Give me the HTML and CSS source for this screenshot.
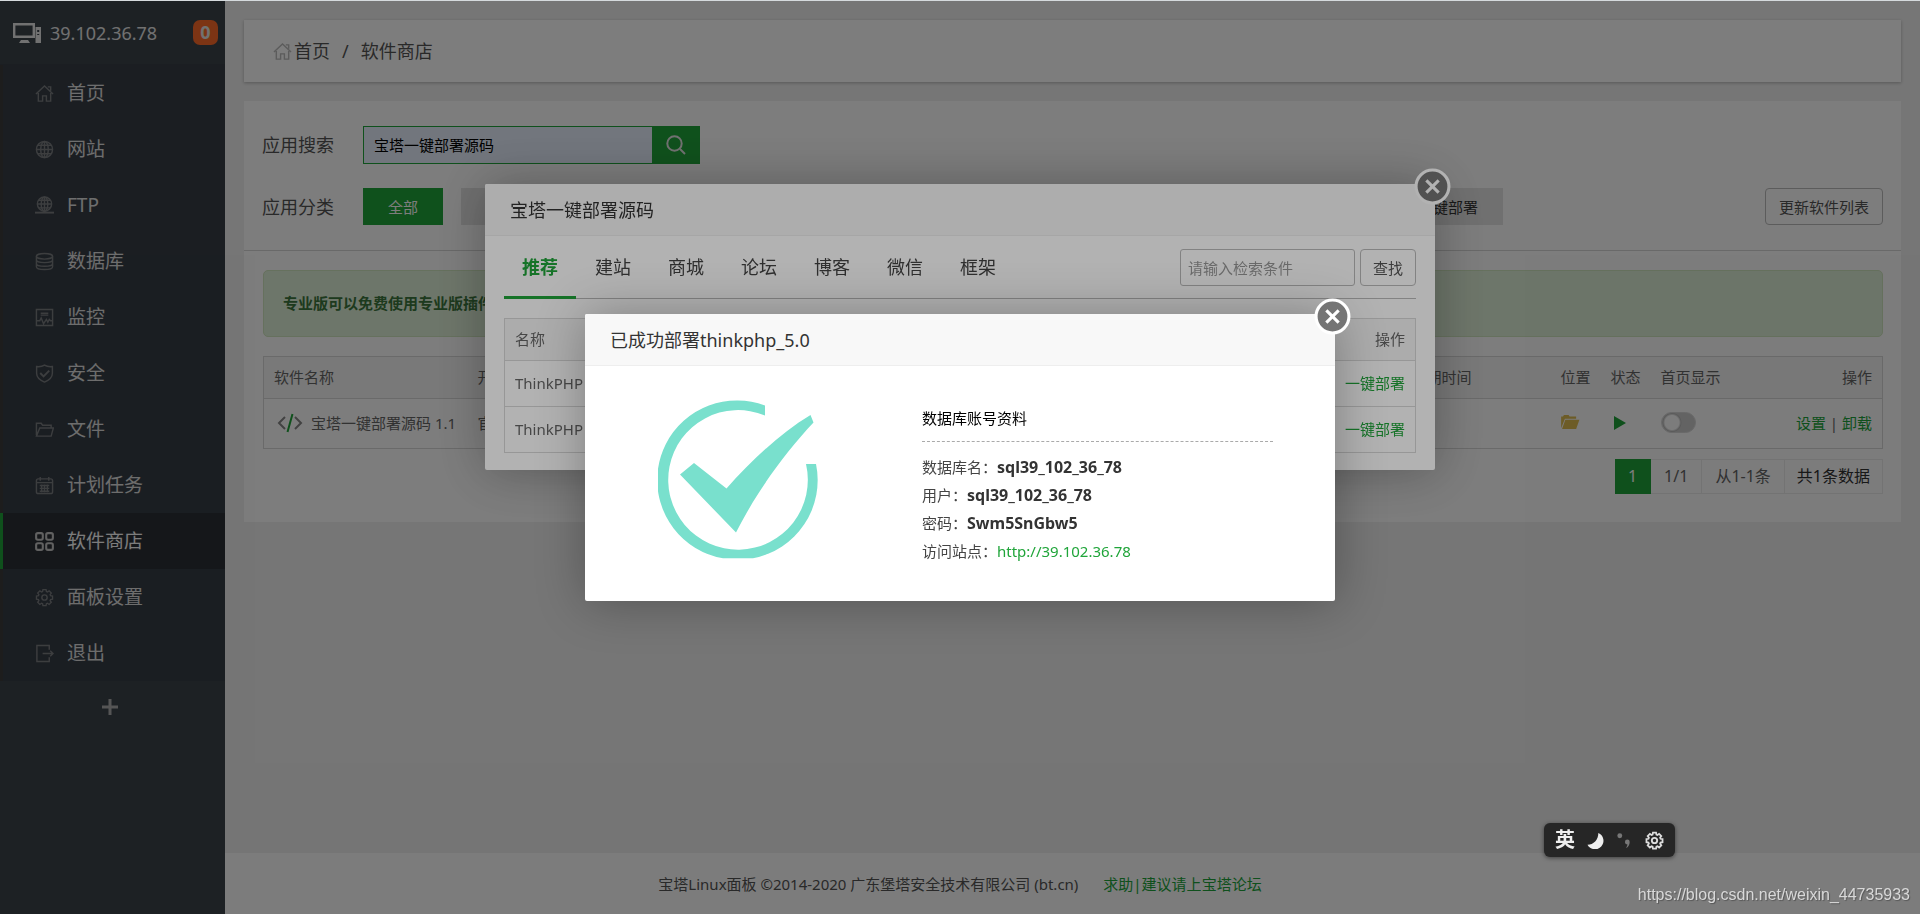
FILE: index.html
```html
<!DOCTYPE html>
<html lang="zh-CN">
<head>
<meta charset="utf-8">
<title>软件商店</title>
<link rel="stylesheet" href="styles.css">
</head>
<body>
<svg class="defs" aria-hidden="true">
  <symbol id="i-home" viewBox="0 0 20 20"><path d="M1 10.500 10 2l9 8.500M3.500 9.500V18H8v-5.500h4V18h4.500V9.500M13.500 3h3v4"/></symbol>
  <symbol id="i-gear" viewBox="0 0 20 20"><circle cx="10" cy="10" r="2.800"/><path d="M8.200 1.200h3.600l.4 2.300 1.200.5 1.900-1.400 2.500 2.500-1.400 1.900.5 1.200 2.300.4v3.600l-2.300.4-.5 1.200 1.400 1.900-2.500 2.500-1.900-1.400-1.200.5-.4 2.300H8.200l-.4-2.300-1.200-.5-1.900 1.400-2.500-2.500 1.400-1.900-.5-1.200-2.300-.4V8.600l2.300-.4.5-1.200-1.400-1.900 2.500-2.500L6.600 4l1.200-.5z" transform="translate(.8 .6) scale(.92)"/></symbol>
</svg>
<div class="topline"></div>
<div class="app">
  <aside class="sidebar">
    <div class="host">
      <svg class="host-icon" viewBox="0 0 28 20"><path d="M1.200 1.200h19.600v12.600H1.200z" fill="none" stroke="currentColor" stroke-width="2.400"/><path d="M8 17h7l2 3H6zM22.500 4h5.500v16h-5.500z" fill="currentColor"/><path d="M24.200 7h2v2h-2zM24.200 11h2v1h-2z" fill="#3c444d"/></svg>
      <span class="host-ip">39.102.36.78</span><span class="badge">0</span>
    </div>
    <nav class="menu">
      <a href="#"><svg class="ico"><use href="#i-home"/></svg>首页</a>
      <a href="#"><svg class="ico" viewBox="0 0 20 20"><circle cx="10" cy="10" r="8.500"/><ellipse cx="10" cy="10" rx="4" ry="8.500"/><path d="M10 1.500v17M1.500 10h17M3 5.500h14M3 14.500h14"/></svg>网站</a>
      <a href="#"><svg class="ico" viewBox="0 0 20 20"><circle cx="10" cy="8.500" r="7.500"/><ellipse cx="10" cy="8.500" rx="3.500" ry="7.500"/><path d="M10 1v17M2.500 8.500h15M4 4.500h12M4 12.500h12"/><path d="M0 17.500h20" stroke-width="2"/></svg>FTP</a>
      <a href="#"><svg class="ico" viewBox="0 0 20 20"><ellipse cx="10" cy="4.500" rx="8.500" ry="3"/><path d="M1.500 4.500v11c0 1.700 3.800 3 8.500 3s8.500-1.300 8.500-3v-11M1.500 8.200c0 1.700 3.800 3 8.500 3s8.500-1.300 8.500-3M1.500 12c0 1.700 3.800 3 8.500 3s8.500-1.300 8.500-3"/></svg>数据库</a>
      <a href="#"><svg class="ico" viewBox="0 0 20 20"><path d="M1.500 1.500h17v17h-17zM6 5.500h8M6 7.500h8M1.500 13.500H5l1.500-3 2.500 6 3-4.500 1.500 3 1.500-3 1.500 1.500h2"/></svg>监控</a>
      <a href="#"><svg class="ico" viewBox="0 0 20 20"><path d="M10 1.200c2.500 1.500 5.500 1.800 8.300 1.500v7c0 4.500-4 7.500-8.300 9.300-4.300-1.800-8.300-4.800-8.300-9.300v-7c2.800.3 5.800 0 8.300-1.500z"/><path d="m5.500 9.500 3.500 3.500L15 7" stroke-width="2"/></svg>安全</a>
      <a href="#"><svg class="ico" viewBox="0 0 20 20"><path d="M1.500 16V3.500h5l1.500 2h9v3M1.500 17 5 8.500h14.300L17 17z"/></svg>文件</a>
      <a href="#"><svg class="ico" viewBox="0 0 20 20"><rect x="1.500" y="3" width="17" height="15.500" rx="2"/><path d="M5.500 1v4M14.500 1v4M1.500 7h17M5 10h10M5 13h10M5 16h10M7 9v8M10 9v8M13 9v8"/></svg>计划任务</a>
      <a href="#" class="active"><svg class="ico" viewBox="0 0 20 20"><rect x="1.200" y="1.200" width="7" height="7" rx="1.800"/><rect x="11.800" y="1.200" width="7" height="7" rx="1.800"/><rect x="1.200" y="11.800" width="7" height="7" rx="1.800"/><rect x="11.800" y="11.800" width="7" height="7" rx="1.800"/></svg>软件商店</a>
      <a href="#"><svg class="ico"><use href="#i-gear"/></svg>面板设置</a>
      <a href="#"><svg class="ico" viewBox="0 0 20 20"><path d="M15 6V1.500H2v17h13V14M8 10h11M16 7l3 3-3 3"/></svg>退出</a>
    </nav>
    <button class="add" aria-label="添加"><svg viewBox="0 0 16 16"><path d="M8 0v16M0 8h16"/></svg></button>
  </aside>
  <div class="main">
    <div class="crumbs"><svg class="ico"><use href="#i-home"/></svg><a href="#">首页</a><span class="sep">/</span><span>软件商店</span></div>
    <section class="store">
      <div class="filters">
        <div class="frow"><label for="q">应用搜索</label><div class="search"><input id="q" type="text" value="宝塔一键部署源码"><button aria-label="搜索"><svg viewBox="0 0 20 20"><circle cx="8.500" cy="8.500" r="7.200"/><path d="m14 14 5 5"/></svg></button></div></div>
        <div class="frow cats-row"><span class="flabel">应用分类</span><div class="cats"><button class="on">全部</button><button class="installed" aria-label="已安装"></button><button class="last">一键部署</button></div><button class="btn refresh">更新软件列表</button></div>
      </div>
      <div class="body">
        <div class="notice">专业版可以免费使用专业版插件</div>
        <table class="grid apps">
          <colgroup><col class="c-name"><col><col class="c-time"><col class="c-loc"><col class="c-state"><col class="c-show"><col class="c-op"></colgroup>
          <thead><tr><th>软件名称</th><th>开发</th><th>到期时间</th><th>位置</th><th>状态</th><th>首页显示</th><th class="r">操作</th></tr></thead>
          <tbody><tr>
            <td><span class="appname"><svg viewBox="0 0 26 20"><path d="M8 4 2 10l6 6M18 4l6 6-6 6" stroke="#888"/><path d="M15.500 1 10.500 19" stroke="#20a53a"/></svg>宝塔一键部署源码 1.1</span></td>
            <td>官方</td><td></td>
            <td><svg class="folder" viewBox="0 0 20 16"><path d="M0 14V1.500h2L3 0h5l1 1.500h7V4H4z"/><path d="M4.500 5H19.500L16 15H1z"/></svg></td>
            <td><svg class="play" viewBox="0 0 12 14"><path d="M0 0v14l12-7z"/></svg></td>
            <td><input class="switch" type="checkbox" aria-label="首页显示"></td>
            <td class="r"><a href="#">设置</a> | <a href="#">卸载</a></td>
          </tr></tbody>
        </table>
        <div class="pager"><span class="cur">1</span><span>1/1</span><span>从1-1条</span><span class="total">共1条数据</span></div>
      </div>
    </section>
    <footer class="footer"><span>宝塔Linux面板 ©2014-2020 广东堡塔安全技术有限公司 (bt.cn)</span><a href="#">求助|建议请上宝塔论坛</a></footer>
  </div>
</div>

<div class="shade shade-deploy">
  <div class="dialog deploy" role="dialog" aria-label="宝塔一键部署源码">
    <h2>宝塔一键部署源码</h2>
    <button class="close" aria-label="关闭"><svg viewBox="0 0 36 36"><circle cx="18" cy="18" r="16"/><path d="m12 12 12 12M24 12 12 24"/></svg></button>
    <div class="deploy-body">
      <div class="tabs">
        <button class="on">推荐</button><button>建站</button><button>商城</button><button>论坛</button><button>博客</button><button>微信</button><button>框架</button>
        <div class="find"><input type="text" placeholder="请输入检索条件" aria-label="检索条件"><button class="btn">查找</button></div>
      </div>
      <table class="grid">
        <thead><tr><th>名称</th><th class="r">操作</th></tr></thead>
        <tbody><tr><td>ThinkPHP</td><td class="r"><a href="#">一键部署</a></td></tr><tr><td>ThinkPHP</td><td class="r"><a href="#">一键部署</a></td></tr></tbody>
      </table>
    </div>
  </div>
</div>

<div class="shade shade-done">
  <div class="dialog done" role="dialog" aria-label="已成功部署thinkphp_5.0">
    <h2>已成功部署thinkphp_5.0</h2>
    <button class="close" aria-label="关闭"><svg viewBox="0 0 36 36"><circle cx="18" cy="18" r="16"/><path d="m12 12 12 12M24 12 12 24"/></svg></button>
    <div class="done-body">
      <svg class="ok" viewBox="0 0 160 160"><path d="M107 5.500C98 2 89 .5 80 .5a79.500 79.500 0 0 0-15 157.800h30A79.500 79.500 0 0 0 158 64h-10a69.800 69.800 0 1 1-41-48.500z"/><path d="M22 74.500 36 63l32.500 25.500C92 62 121 34 152.500 15l3 7.500C127 53 99 91 78 132.500z"/></svg>
      <div class="info">
        <h3>数据库账号资料</h3>
        <p>数据库名：<strong>sql39_102_36_78</strong></p>
        <p>用户：<strong>sql39_102_36_78</strong></p>
        <p>密码：<strong>Swm5SnGbw5</strong></p>
        <p>访问站点：<a href="#">http://39.102.36.78</a></p>
      </div>
    </div>
  </div>
</div>

<div class="ime"><b>英</b><svg viewBox="0 0 18 18"><path d="M12 1a9 9 0 1 1-11.500 12.500C7 13.500 12 8 12 1z" fill="#eee"/></svg><svg viewBox="0 0 18 18"><circle cx="4" cy="4" r="2.600" fill="#777"/><path d="M9.500 10.500a2.500 2.500 0 1 1 5 0c0 3-1.500 5.500-4 6.500 1-1.500 1.500-2.500 1.500-4-1.500 0-2.500-1-2.500-2.500z" fill="#777"/></svg><svg class="ime-gear"><use href="#i-gear"/></svg></div>
<div class="mark">https://blog.csdn.net/weixin_44735933</div>
</body>
</html>
```
FILE: styles.css
```css
* { box-sizing: border-box; }
body { margin: 0; font: 15px/22px "Noto Sans", "Noto Sans CJK SC", sans-serif; color: #666; background: #f0f0f0; overflow: hidden; }
button, input { font: inherit; color: inherit; margin: 0; }
button { cursor: pointer; }
a { color: #20a53a; text-decoration: none; }
h2, h3, p { margin: 0; font-weight: normal; }
.defs { position: absolute; width: 0; height: 0; }
.topline { position: fixed; inset: 0 0 auto 0; height: 1px; background: #d5dadd; z-index: 9; }
.app { display: flex; min-height: 100vh; padding-top: 1px; }
.ico { width: 19px; height: 19px; fill: none; stroke: currentColor; stroke-width: 1.5; flex: none; }

.sidebar { width: 225px; background: #3c444b; flex: none; color: #e0e0e0; }
.host { display: flex; align-items: center; height: 63px; padding: 0 7px 0 13px; gap: 9px; font-size: 18px; color: #e6e6e6; }
.host-icon { width: 28px; height: 20px; }
.host-ip { flex: 1; }
.badge { width: 25px; height: 25px; border-radius: 7px; background: #fc6a2a; text-align: center; font-weight: bold; line-height: 25px; }
.menu { padding-top: 1px; background: #373e47; }
.menu a { display: flex; align-items: center; gap: 13px; height: 56px; padding-left: 32px; border-left: 3px solid #3c3c3c; font-size: 19px; color: #e0e0e0; }
.menu .ico { color: #7c7f82; }
.menu .active { background: #2d3036; border-left-color: #20a53a; color: #fff; }
.menu .active .ico { color: #c8c8c8; stroke-width: 2.2; }
.add { display: block; width: 100%; padding: 17px 6px 0 0; border: 0; background: none; color: #b0b0b0; }
.add svg { width: 16px; height: 16px; stroke: currentColor; stroke-width: 3; }

.main { flex: 1; display: flex; flex-direction: column; padding: 19px 0 0; }
.crumbs { display: flex; align-items: center; height: 62px; margin: 0 19px; padding-left: 29px; background: #fff; box-shadow: 0 1px 3px rgba(0,0,0,.25); font-size: 18px; color: #555; }
.crumbs a { color: #555; margin-left: 2px; }
.crumbs .ico { color: #bbb; }
.sep { padding: 0 12px; }
.store { margin: 19px 19px 0; background: #fff; padding-bottom: 28px; }
.filters { padding: 25px 18px 25px; border-bottom: 1px solid #d6d6d6; }
.frow { display: flex; align-items: center; }
.frow label, .flabel { width: 101px; font-size: 18px; color: #555; flex: none; }
.cats-row { margin-top: 24px; }
.search { display: flex; height: 38px; }
.search input { width: 289px; padding: 0 10px; border: 1px solid #20a53a; border-right: 0; background: #e8f0fe; color: #000; }
.search button { width: 48px; border: 0; background: #20a53a; color: #e6e6e6; padding: 0; display: grid; place-items: center; }
.search svg { width: 20px; height: 20px; fill: none; stroke: currentColor; stroke-width: 2; }
.cats { display: flex; gap: 18px; flex: 1; max-width: 1140px; }
.cats button { height: 37px; padding: 0 25px; border: 0; background: #e4e4e4; color: #333; }
.cats .on { background: #20a53a; color: #fff; }
.cats .installed { width: 95px; }
.cats .last { margin-left: auto; }
.btn { height: 37px; padding: 0 13px; border: 1px solid #bbb; border-radius: 4px; background: transparent; color: #555; }
.refresh { margin-left: auto; }
.body { padding: 19px 18px 0 19px; }
.notice { height: 67px; padding: 0 19px; line-height: 65px; border: 1px solid #d0e6bf; border-radius: 5px; background: #dff0d8; color: #3c763d; font-weight: bold; margin-bottom: 19px; }
.grid { width: 100%; border-collapse: collapse; border: 1px solid #d8d8d8; table-layout: fixed; }
.grid th { height: 42px; padding: 0 10px 2px; font-weight: normal; text-align: left; background: #f6f6f6; }
.grid td { height: 46px; padding: 0 10px 2px; border-top: 1px solid #d8d8d8; }
.grid .r { text-align: right; }
.grid.apps td { height: 50px; }
.c-name { width: 204px; } .c-time { width: 149px; } .c-loc, .c-state { width: 50px; } .c-show { width: 132px; } .c-op { width: 100px; }
.apps svg { display: block; }
.appname { display: flex; align-items: center; gap: 8px; white-space: nowrap; padding-left: 3px; }
.appname svg { width: 26px; height: 20px; fill: none; stroke-width: 2; }
.folder { width: 19px; height: 15px; fill: #e0bd50; }
.play { width: 12px; height: 14px; fill: #20a53a; margin-left: 3px; }
.switch { appearance: none; display: block; width: 35px; height: 21px; margin: 0; border-radius: 11px; background: radial-gradient(circle at 10px 50%, #fff 7px, #bbb 9px, #ccc 10px); border: 1px solid #d8d8d8; }
.pager { display: flex; justify-content: flex-end; margin-top: 10px; font-size: 16px; }
.pager span { height: 35px; line-height: 33px; padding: 0 13px; border: 1px solid #ececec; border-left: 0; }
.pager .cur { background: #20a53a; border-color: #20a53a; color: #fff; }
.pager .total { color: #333; padding: 0 12px; }
.footer { margin-top: auto; height: 61px; display: flex; align-items: center; justify-content: center; gap: 25px; background: #fff; color: #555; padding-right: 225px; }

.shade { position: fixed; inset: 0; display: flex; justify-content: center; align-items: flex-start; background: rgba(0,0,0,.3); }
.shade-done { align-items: center; }
.dialog { position: relative; background: #fff; border-radius: 2px; box-shadow: 1px 1px 50px rgba(0,0,0,.3); }
.dialog h2 { height: 52px; padding: 0 25px; line-height: 52px; border-bottom: 1px solid #eee; border-radius: 2px 2px 0 0; background: #f8f8f8; font-size: 18px; color: #333; }
.close { position: absolute; top: -16px; right: -16px; width: 37px; height: 37px; padding: 0; border: 0; background: none; }
.close svg { display: block; fill: #757575; stroke: #fff; stroke-width: 3; }
.deploy { width: 950px; margin-top: 184px; }
.deploy-body { padding: 0 19px 17px; }
.tabs { display: flex; gap: 1px; height: 63px; margin-bottom: 19px; border-bottom: 1px solid #bbb; }
.tabs > button { width: 72px; height: 63px; padding: 2px 0 0; border: 0; border-bottom: 3px solid transparent; background: none; font-size: 18px; color: #444; }
.tabs > .on { color: #20a53a; font-weight: bold; border-color: #20a53a; }
.find { display: flex; gap: 5px; margin-left: auto; padding-top: 13px; }
.find input { width: 175px; height: 37px; padding: 0 7px; border: 1px solid #bbb; border-radius: 3px; background: transparent; }
.find input::placeholder { color: #999; }
.find .btn { padding: 0 12px; }
.done { width: 750px; }
.done-body { display: flex; align-items: flex-start; padding: 34px 62px 36px 73px; }
.ok { width: 160px; height: 160px; margin-right: 104px; fill: #79e0cd; flex: none; }
.info { flex: 1; color: #444; line-height: 28px; }
.info h3 { height: 42px; padding-top: 4px; margin-bottom: 11px; border-bottom: 1px dashed #aaa; font-size: 15px; color: #000; }
.info p { height: 28px; }
.info strong { color: #333; font-size: 16px; }

.ime { position: fixed; right: 245px; bottom: 57px; display: flex; align-items: center; gap: 12px; height: 34px; padding: 0 11px; border-radius: 6px; background: #262626; color: #eee; font-size: 20px; box-shadow: 0 1px 4px rgba(0,0,0,.5); }
.ime svg { width: 17px; height: 17px; }
.ime .ime-gear { width: 19px; height: 19px; fill: none; stroke: #ddd; stroke-width: 2; }
.mark { position: fixed; right: 10px; bottom: 8px; font: 16px/22px "Liberation Sans", sans-serif; color: #d8d8d8; text-shadow: 1px 1px 1px rgba(0,0,0,.3); }
```
